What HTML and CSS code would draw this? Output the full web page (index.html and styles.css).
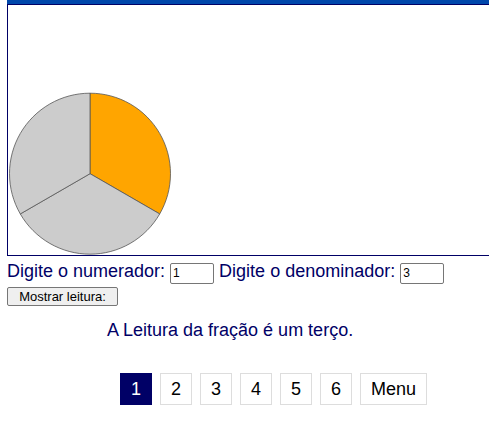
FILE: index.html
```html
<!DOCTYPE html>
<html lang="pt">
<head>
<meta charset="utf-8">
<title>Frações</title>
<link rel="stylesheet" href="styles.css">
</head>
<body>
<div class="page">
  <div class="bar"></div>
  <div class="stage">
    <svg class="pie" width="481" height="250" viewBox="0 0 481 250">
      <path d="M82,168.7 L82,88.2 A80.5,80.5 0 0 1 151.7,208.95 Z" fill="#ffa500" stroke="#555" stroke-width="0.8"/>
      <path d="M82,168.7 L151.7,208.95 A80.5,80.5 0 0 1 12.3,208.95 Z" fill="#cccccc" stroke="#555" stroke-width="0.8"/>
      <path d="M82,168.7 L12.3,208.95 A80.5,80.5 0 0 1 82,88.2 Z" fill="#cccccc" stroke="#555" stroke-width="0.8"/>
    </svg>
  </div>
  <div class="form-line">
    <label>Digite o numerador: <input class="num" type="text" value="1"></label>
    <label>Digite o denominador: <input class="num" type="text" value="3"></label>
  </div>
  <div class="btn-line"><button class="show">Mostrar leitura:</button></div>
  <p class="result">A Leitura da fração é um terço.</p>
  <nav class="pager">
    <a class="pg active">1</a>
    <a class="pg">2</a>
    <a class="pg">3</a>
    <a class="pg">4</a>
    <a class="pg">5</a>
    <a class="pg">6</a>
    <a class="pg">Menu</a>
  </nav>
</div>
</body>
</html>
```
FILE: styles.css
```css
html, body {
  margin: 0;
  padding: 0;
  background: #fff;
}
body {
  font-family: "Liberation Sans", Arial, sans-serif;
  color: #000066;
}
.page {
  padding-left: 7px;
}
.bar {
  width: 482px;
  height: 4px;
  background: #0047ab;
}
.stage {
  width: 481px;
  height: 250px;
  border-top: 1px solid #000066;
  border-left: 1px solid #000066;
  border-bottom: 1px solid #000066;
}
.pie {
  display: block;
}
.form-line {
  margin-top: 4px;
  font-size: 18px;
  line-height: 22px;
  height: 23px;
}
.num {
  width: 38px;
  height: 17px;
  padding: 1px 2px;
  border: 1px solid #767676;
  border-radius: 2px;
  font-family: "Liberation Sans", Arial, sans-serif;
  font-size: 12px;
  color: #000;
  vertical-align: baseline;
  box-sizing: content-box;
}
.btn-line {
  margin-top: 4px;
  height: 19px;
}
.show {
  display: block;
  height: 19px;
  padding: 0 6px;
  font-family: "Liberation Sans", Arial, sans-serif;
  font-size: 13px;
  color: #000;
  background: #efefef;
  border: 1px solid #767676;
  border-radius: 2px;
  width: 111px;
}
.result {
  margin: 13px 0 0 100px;
  font-size: 18px;
  line-height: 22px;
}
.pager {
  display: flex;
  gap: 8px;
  margin: 32px 0 0 113px;
}
.pg {
  display: block;
  padding: 0 10px;
  height: 30px;
  line-height: 30px;
  border: 1px solid #dddddd;
  font-size: 18px;
  color: #000;
}
.pg.active {
  background: #000066;
  color: #fff;
  border-color: #000066;
}
```
